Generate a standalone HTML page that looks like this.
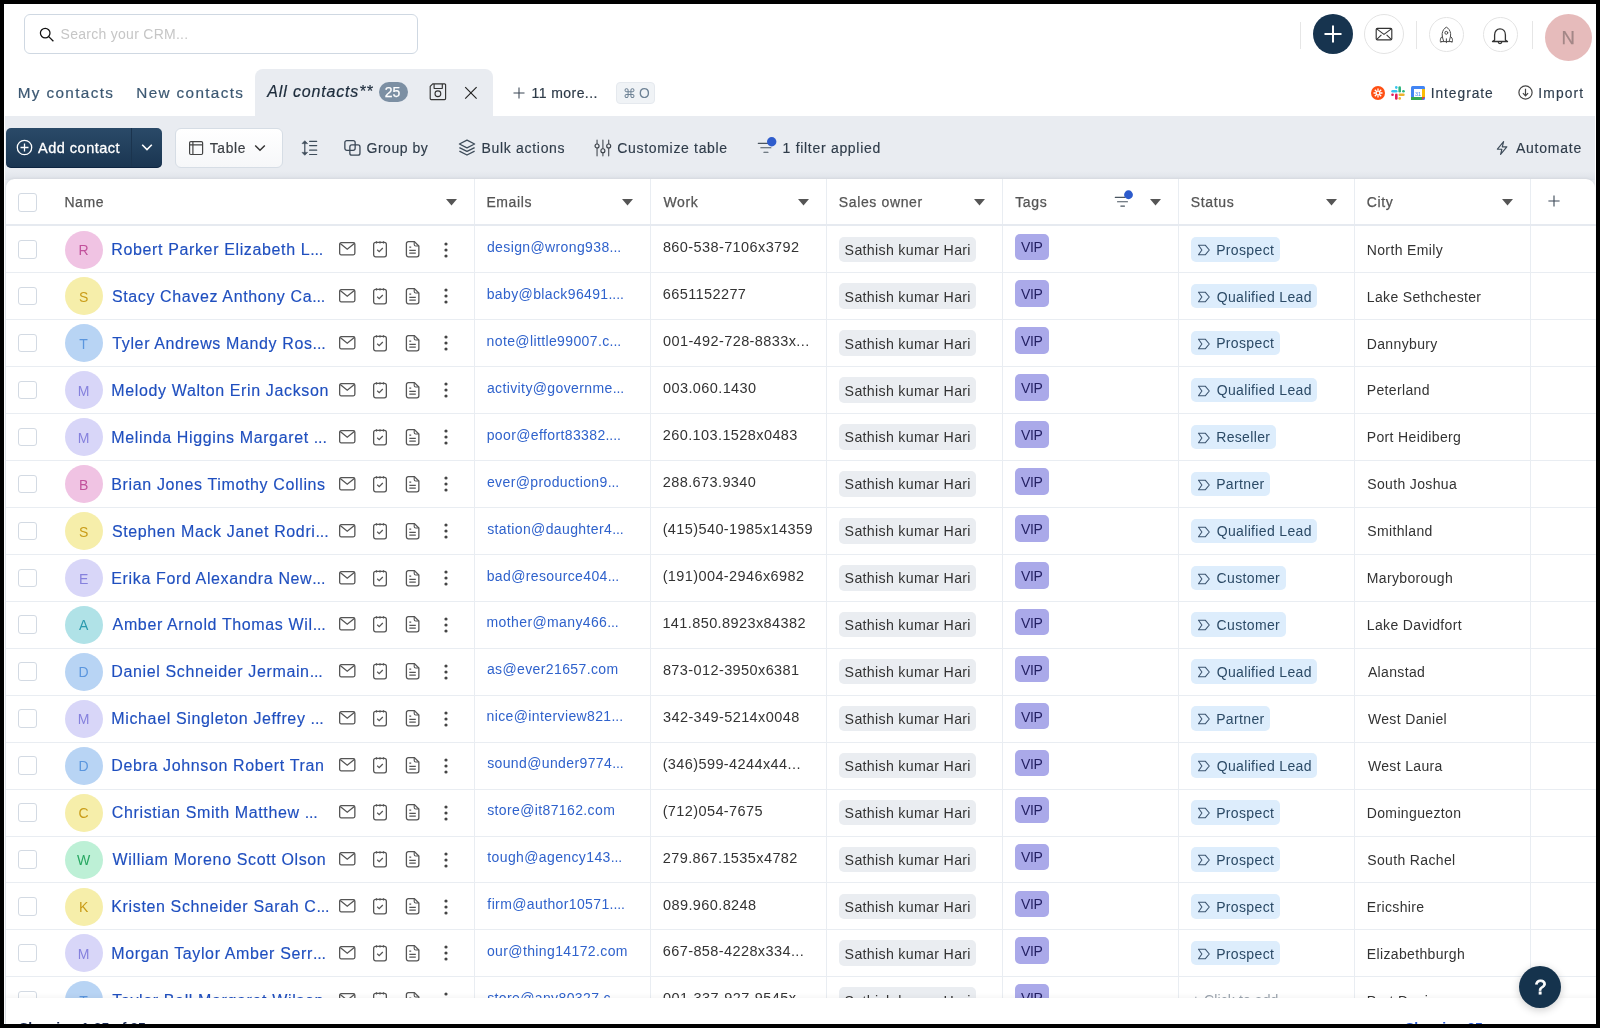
<!DOCTYPE html><html><head><meta charset="utf-8"><style>
*{box-sizing:border-box;margin:0;padding:0}
html,body{width:1600px;height:1028px;overflow:hidden;background:#fff}
#root{position:absolute;left:0;top:0;width:1600px;height:1028px;will-change:transform}
body{position:relative;font-family:"Liberation Sans",sans-serif;color:#333}
.a{position:absolute}
.t{position:absolute;white-space:nowrap;line-height:1;-webkit-font-smoothing:antialiased}
.bd{position:absolute;background:#000}
svg{display:block}
</style></head><body><div id="root">
<div class="a" style="left:24px;top:14px;width:394px;height:40px;border:1px solid #cfd8e2;border-radius:6px;background:#fff"></div>
<svg class="a" style="left:39px;top:27px" width="16" height="15" viewBox="0 0 16 15"><circle cx="6.2" cy="6.1" r="4.8" fill="none" stroke="#111" stroke-width="1.25"/><path d="M9.7 9.6 L14.4 14.2" stroke="#111" stroke-width="1.3"/></svg>
<div class="t" style="left:60.57px;top:27.00px;font-size:14px;letter-spacing:0.276px;color:#c6c6c6;">Search your CRM...</div>
<div class="a" style="left:1300px;top:22px;width:1px;height:27px;background:#e6e6e6"></div>
<div class="a" style="left:1312.6px;top:14px;width:40px;height:40px;border-radius:50%;background:#17344f"></div>
<svg class="a" style="left:1323px;top:24px" width="20" height="20" viewBox="0 0 20 20"><path d="M10 1.5 V18.5 M1.5 10 H18.5" stroke="#fff" stroke-width="2"/></svg>
<div class="a" style="left:1364px;top:14px;width:40px;height:40px;border-radius:50%;border:1px solid #e3e3e3"></div>
<svg class="a" style="left:1375px;top:27px" width="18" height="14" viewBox="0 0 18 14"><rect x="1.2" y="1.3" width="15.6" height="11.6" rx="1.2" fill="none" stroke="#333" stroke-width="1.15"/><path d="M1.7 1.8 L9 7.4 L16.3 1.8 M1.8 12.4 L6.4 7.8 M16.2 12.4 L11.6 7.8" fill="none" stroke="#333" stroke-width="1.05"/></svg>
<div class="a" style="left:1416px;top:21px;width:1px;height:28px;background:#e6e6e6"></div>
<div class="a" style="left:1429px;top:16.5px;width:35px;height:35px;border-radius:50%;border:1px solid #e3e3e3"></div>
<svg class="a" style="left:1439px;top:26px" width="15" height="18" viewBox="0 0 15 18"><g fill="none" stroke="#484848" stroke-width="1" stroke-linejoin="round" stroke-linecap="round"><path d="M4.7 15.3 C3.5 12 3.0 9.3 3.2 7.5 C3.6 4.5 5.3 2.2 7.4 1.2 C9.5 2.2 11.2 4.5 11.6 7.5 C11.8 9.3 11.3 12 10.1 15.3"/><path d="M2.3 15.6 H12.5"/><path d="M3.5 10.2 C2 11.2 1.3 12.8 1.3 14.5 C1.3 15.6 1.5 16.2 1.9 16.4 L2.6 15.6"/><path d="M11.3 10.2 C12.8 11.2 13.5 12.8 13.5 14.5 C13.5 15.6 13.3 16.2 12.9 16.4 L12.2 15.6"/><path d="M7.4 12.8 V16.7"/><circle cx="7.3" cy="6.8" r="1.45"/></g></svg>
<div class="a" style="left:1483px;top:16.5px;width:35px;height:35px;border-radius:50%;border:1px solid #e3e3e3"></div>
<svg class="a" style="left:1491px;top:27px" width="18" height="18" viewBox="0 0 18 18"><path d="M3.6 13 V8 C3.6 4.3 6 1.8 9 1.8 C12 1.8 14.4 4.3 14.4 8 V13 L16.5 14.5 H1.5 Z" fill="none" stroke="#333" stroke-width="1.3" stroke-linejoin="round"/><path d="M7.2 14.8 a1.8 1.8 0 0 0 3.6 0" fill="none" stroke="#333" stroke-width="1.2"/></svg>
<div class="a" style="left:1532px;top:21px;width:1px;height:28px;background:#e6e6e6"></div>
<div class="a" style="left:1545px;top:14px;width:47px;height:47px;border-radius:50%;background:#e6bbbb"></div>
<div class="t" style="left:1561.52px;top:29.00px;font-size:18.5px;letter-spacing:0.000px;color:#a38787;-webkit-text-stroke:0.25px #a38787">N</div>
<div class="t" style="left:17.68px;top:85.00px;font-size:15.3px;letter-spacing:1.373px;color:#3c5872;-webkit-text-stroke:0.2px #3c5872">My contacts</div>
<div class="t" style="left:136.28px;top:85.00px;font-size:15.3px;letter-spacing:1.353px;color:#3c5872;-webkit-text-stroke:0.2px #3c5872">New contacts</div>
<div class="a" style="left:255px;top:69px;width:238px;height:50px;border-radius:8px 8px 0 0;background:#e9ecf1"></div>
<div class="t" style="left:267.30px;top:84.00px;font-size:16px;letter-spacing:0.838px;color:#1c2b3b;font-style:italic;-webkit-text-stroke:0.2px #1c2b3b">All contacts**</div>
<div class="a" style="left:379px;top:81.5px;width:28.5px;height:20px;border-radius:10px;background:#7c8fa3"></div>
<div class="t" style="left:384.80px;top:85.00px;font-size:14px;letter-spacing:0.000px;color:#fff;-webkit-text-stroke:0.25px #fff">25</div>
<svg class="a" style="left:429px;top:82px" width="18" height="19" viewBox="0 0 18 19"><path d="M3.7 1.85 H15.6 a1 1 0 0 1 1 1 V16.6 a1 1 0 0 1 -1 1 H2.2 a1 1 0 0 1 -1 -1 V4.3 Z" fill="none" stroke="#333" stroke-width="1.15" stroke-linejoin="round"/><path d="M5.1 2 V5.9 a0.6 0.6 0 0 0 0.6 0.6 H12.7 a0.6 0.6 0 0 0 0.6 -0.6 V2" fill="none" stroke="#333" stroke-width="1.15"/><circle cx="8.9" cy="11.75" r="2.9" fill="none" stroke="#333" stroke-width="1.1"/></svg>
<svg class="a" style="left:464px;top:86px" width="14" height="14" viewBox="0 0 14 14"><path d="M1.2 1.2 L12.6 12.6 M12.6 1.2 L1.2 12.6" stroke="#222" stroke-width="1.15"/></svg>
<svg class="a" style="left:513px;top:86.5px" width="12" height="12" viewBox="0 0 12 12"><path d="M6 0.5 V11.5 M0.5 6 H11.5" stroke="#3a4654" stroke-width="1.05"/></svg>
<div class="t" style="left:531.45px;top:86.00px;font-size:14px;letter-spacing:0.443px;color:#2d3a48;-webkit-text-stroke:0.2px #2d3a48">11 more...</div>
<div class="a" style="left:616px;top:81.5px;width:39px;height:22px;border-radius:4px;background:#f0f3f6;border:1px solid #e5e9ee"></div>
<div class="t" style="left:622.5px;top:88px;font-size:12.5px;color:#6e8295">&#8984;</div>
<div class="t" style="left:638.88px;top:87.00px;font-size:13.8px;letter-spacing:0.000px;color:#6e8295;">O</div>
<svg class="a" style="left:1371px;top:86px" width="14" height="14" viewBox="0 0 14 14"><circle cx="7" cy="7" r="7" fill="#ff4f12"/><path d="M7 2.5 V11.5 M2.5 7 H11.5 M3.8 3.8 L10.2 10.2 M10.2 3.8 L3.8 10.2" stroke="#fff" stroke-width="1.3"/><circle cx="7" cy="7" r="1.2" fill="#ff4f12"/></svg>
<svg class="a" style="left:1391px;top:86px" width="14" height="14" viewBox="0 0 14 14"><g stroke-linecap="round" stroke-width="2.6"><path d="M1.6 5.3 H5.2" stroke="#36c5f0"/><path d="M5.3 1.4 V1.6" stroke="#36c5f0"/><path d="M8.7 1.5 V5.2" stroke="#2eb67d"/><path d="M12.5 5.3 H12.4" stroke="#2eb67d"/><path d="M8.8 8.7 H12.4" stroke="#ecb22e"/><path d="M8.7 12.5 V12.4" stroke="#ecb22e"/><path d="M5.3 8.8 V12.5" stroke="#e01e5a"/><path d="M1.5 8.7 H1.6" stroke="#e01e5a"/></g></svg>
<svg class="a" style="left:1411px;top:86px" width="14" height="14" viewBox="0 0 14 14"><rect x="0" y="0" width="14" height="14" rx="1.5" fill="#4285f4"/><rect x="3" y="3" width="8" height="8" fill="#fff"/><rect x="11" y="3" width="3" height="8" fill="#fbbc04"/><rect x="0" y="11" width="11" height="3" fill="#34a853"/><path d="M11 11 H14 L11 14 Z" fill="#ea4335"/><text x="7" y="9.6" font-size="5.5" text-anchor="middle" fill="#4285f4" font-family="Liberation Sans">31</text></svg>
<div class="t" style="left:1430.66px;top:87.00px;font-size:13.8px;letter-spacing:0.957px;color:#2d3c4c;-webkit-text-stroke:0.15px #2d3c4c">Integrate</div>
<svg class="a" style="left:1518px;top:85px" width="15" height="15" viewBox="0 0 15 15"><circle cx="7.5" cy="7.5" r="6.6" fill="none" stroke="#444" stroke-width="1.2"/><path d="M7.5 3.8 V10.6 M4.9 8.2 L7.5 10.8 L10.1 8.2" fill="none" stroke="#444" stroke-width="1.2"/></svg>
<div class="t" style="left:1538.36px;top:87.00px;font-size:13.8px;letter-spacing:1.138px;color:#2d3c4c;-webkit-text-stroke:0.15px #2d3c4c">Import</div>
<div class="a" style="left:5px;top:116px;width:1590px;height:908px;background:#e9ecf1"></div>
<div class="a" style="left:5px;top:171px;width:1590px;height:9px;background:linear-gradient(rgba(0,0,0,0),rgba(30,50,80,0.05))"></div>
<div class="a" style="left:6px;top:128px;width:156px;height:39.5px;border-radius:5px;background:linear-gradient(#2a4a68,#1a3551);box-shadow:inset 0 -1px 0 rgba(0,20,50,0.5)"></div>
<div class="a" style="left:131px;top:128px;width:1px;height:39px;background:#1b344e"></div>
<svg class="a" style="left:16px;top:139px" width="17" height="17" viewBox="0 0 17 17"><circle cx="8.5" cy="8.5" r="7.2" fill="none" stroke="#fff" stroke-width="1.3"/><path d="M8.5 4.5 V12.5 M4.5 8.5 H12.5" stroke="#fff" stroke-width="1.3"/></svg>
<div class="t" style="left:38.00px;top:141.00px;font-size:14.5px;letter-spacing:0.504px;color:#fff;-webkit-text-stroke:0.3px #fff">Add contact</div>
<svg class="a" style="left:141px;top:143px" width="12" height="9" viewBox="0 0 12 9"><path d="M1.2 1.8 L6 6.6 L10.8 1.8" fill="none" stroke="#fff" stroke-width="1.6"/></svg>
<div class="a" style="left:175px;top:128px;width:108px;height:39.5px;border-radius:6px;background:linear-gradient(#ffffff,#f6f7f9);border:1px solid #d6dde5"></div>
<svg class="a" style="left:188px;top:140px" width="16" height="16" viewBox="0 0 16 16"><rect x="1.6" y="1.6" width="13" height="12.9" rx="1.2" fill="none" stroke="#444" stroke-width="1.2"/><path d="M1.6 4.9 H14.6 M4.9 1.6 V14.5" stroke="#444" stroke-width="1.2"/></svg>
<div class="t" style="left:209.72px;top:142.00px;font-size:13.8px;letter-spacing:0.711px;color:#3b3f44;-webkit-text-stroke:0.2px #3b3f44">Table</div>
<svg class="a" style="left:254px;top:144px" width="12" height="8" viewBox="0 0 12 8"><path d="M1.2 1.5 L6 6.2 L10.8 1.5" fill="none" stroke="#333" stroke-width="1.5"/></svg>
<svg class="a" style="left:300px;top:139px" width="20" height="18" viewBox="0 0 20 18"><path d="M4.8 3 V15" fill="none" stroke="#3e4c5a" stroke-width="1.2"/><path d="M2 4.6 L4.8 1.7 L7.6 4.6 Z M2 13.4 L4.8 16.3 L7.6 13.4 Z" fill="#3e4c5a" stroke="#3e4c5a" stroke-width="0.6" stroke-linejoin="round"/><path d="M9.6 2.3 H16.7 M9.6 6.6 H16.7 M9.6 11.2 H16.7 M9.6 15.5 H16.7" stroke="#3e4c5a" stroke-width="1.2" stroke-linecap="round"/></svg>
<svg class="a" style="left:343px;top:139px" width="18" height="18" viewBox="0 0 18 18"><rect x="1.85" y="1.55" width="10.3" height="9.8" rx="2" fill="none" stroke="#3a4756" stroke-width="1.3"/><rect x="6.85" y="5.9" width="10.1" height="10.25" rx="2" fill="none" stroke="#3a4756" stroke-width="1.3"/></svg>
<div class="t" style="left:366.50px;top:141.00px;font-size:14px;letter-spacing:0.527px;color:#2f3c4a;-webkit-text-stroke:0.15px #2f3c4a">Group by</div>
<svg class="a" style="left:458px;top:139px" width="18" height="18" viewBox="0 0 18 18"><path d="M9 1.2 L16.6 5 L9 8.8 L1.4 5 Z" fill="none" stroke="#3e4c5a" stroke-width="1.3" stroke-linejoin="round"/><path d="M1.4 8.6 L9 12.4 L16.6 8.6 M1.4 12.2 L9 16 L16.6 12.2" fill="none" stroke="#3e4c5a" stroke-width="1.3" stroke-linejoin="round"/></svg>
<div class="t" style="left:481.48px;top:141.00px;font-size:14px;letter-spacing:0.695px;color:#2f3c4a;-webkit-text-stroke:0.15px #2f3c4a">Bulk actions</div>
<svg class="a" style="left:594px;top:139px" width="18" height="18" viewBox="0 0 18 18"><path d="M3.05 1 V16.8 M8.9 1 V16.8 M14.7 1 V16.8" stroke="#4a5058" stroke-width="1.15" stroke-linecap="round"/><circle cx="3.05" cy="7" r="2" fill="#e9ecf1" stroke="#3a4048" stroke-width="1.15"/><circle cx="8.9" cy="11.7" r="2" fill="#e9ecf1" stroke="#3a4048" stroke-width="1.15"/><circle cx="14.7" cy="7" r="2" fill="#e9ecf1" stroke="#3a4048" stroke-width="1.15"/></svg>
<div class="t" style="left:617.30px;top:141.00px;font-size:14px;letter-spacing:0.677px;color:#2f3c4a;-webkit-text-stroke:0.15px #2f3c4a">Customize table</div>
<svg class="a" style="left:757px;top:136px" width="22" height="18" viewBox="0 0 22 18"><path d="M1.3 7.4 H12 M3.8 11.8 H13.9 M6.9 16.2 H11" stroke="#4a5560" stroke-width="1.1" stroke-linecap="round"/><circle cx="14.7" cy="5.8" r="4.7" fill="#2e5ccc"/></svg>
<div class="t" style="left:782.55px;top:141.00px;font-size:14px;letter-spacing:0.703px;color:#2f3c4a;-webkit-text-stroke:0.15px #2f3c4a">1 filter applied</div>
<svg class="a" style="left:1495px;top:140px" width="14" height="16" viewBox="0 0 14 16"><path d="M8.6 1.6 L2.4 9.2 H6.9 L5.6 14.4 L11.8 6.8 H7.3 Z" fill="none" stroke="#3e4c5a" stroke-width="1.15" stroke-linejoin="round"/></svg>
<div class="t" style="left:1516.00px;top:141.00px;font-size:14px;letter-spacing:0.749px;color:#2f3c4a;-webkit-text-stroke:0.15px #2f3c4a">Automate</div>
<div class="a" style="left:5px;top:179.3px;width:1590px;height:845px;background:#fff;border-radius:9px 9px 0 0;border-left:1px solid #dfe4ea;box-shadow:0 -1px 3px rgba(0,0,0,0.05)"></div>
<div class="t" style="left:64.38px;top:195.00px;font-size:14px;letter-spacing:0.62px;color:#555;-webkit-text-stroke:0.25px #555">Name</div>
<svg class="a" style="left:446px;top:199px" width="11" height="7" viewBox="0 0 11 7"><path d="M0 0 H11 L5.5 6.5 Z" fill="#555"/></svg>
<div class="t" style="left:486.38px;top:195.00px;font-size:14px;letter-spacing:0.62px;color:#555;-webkit-text-stroke:0.25px #555">Emails</div>
<svg class="a" style="left:622px;top:199px" width="11" height="7" viewBox="0 0 11 7"><path d="M0 0 H11 L5.5 6.5 Z" fill="#555"/></svg>
<div class="t" style="left:663.50px;top:195.00px;font-size:14px;letter-spacing:0.62px;color:#555;-webkit-text-stroke:0.25px #555">Work</div>
<svg class="a" style="left:798px;top:199px" width="11" height="7" viewBox="0 0 11 7"><path d="M0 0 H11 L5.5 6.5 Z" fill="#555"/></svg>
<div class="t" style="left:838.87px;top:195.00px;font-size:14px;letter-spacing:0.62px;color:#555;-webkit-text-stroke:0.25px #555">Sales owner</div>
<svg class="a" style="left:974px;top:199px" width="11" height="7" viewBox="0 0 11 7"><path d="M0 0 H11 L5.5 6.5 Z" fill="#555"/></svg>
<div class="t" style="left:1015.22px;top:195.00px;font-size:14px;letter-spacing:0.62px;color:#555;-webkit-text-stroke:0.25px #555">Tags</div>
<svg class="a" style="left:1150px;top:199px" width="11" height="7" viewBox="0 0 11 7"><path d="M0 0 H11 L5.5 6.5 Z" fill="#555"/></svg>
<div class="t" style="left:1190.87px;top:195.00px;font-size:14px;letter-spacing:0.62px;color:#555;-webkit-text-stroke:0.25px #555">Status</div>
<svg class="a" style="left:1326px;top:199px" width="11" height="7" viewBox="0 0 11 7"><path d="M0 0 H11 L5.5 6.5 Z" fill="#555"/></svg>
<div class="t" style="left:1366.80px;top:195.00px;font-size:14px;letter-spacing:0.62px;color:#555;-webkit-text-stroke:0.25px #555">City</div>
<svg class="a" style="left:1502px;top:199px" width="11" height="7" viewBox="0 0 11 7"><path d="M0 0 H11 L5.5 6.5 Z" fill="#555"/></svg>
<div class="a" style="left:18px;top:193px;width:19px;height:19px;border:1.3px solid #d3dae3;border-radius:3px;background:#fff"></div>
<svg class="a" style="left:1114px;top:189px" width="20" height="18" viewBox="0 0 20 18"><path d="M1.3 8.4 H11 M3.5 12.75 H13.5 M6.8 17.1 H10.5" stroke="#4a5560" stroke-width="1.1" stroke-linecap="round"/><circle cx="14.5" cy="5.75" r="4.4" fill="#2d5bcc"/></svg>
<svg class="a" style="left:1548.2px;top:194.5px" width="12" height="12" viewBox="0 0 12 12"><path d="M6 0.5 V11.4 M0.4 6 H11.6" stroke="#3a4756" stroke-width="1.1"/></svg>
<div class="a" style="left:474px;top:179px;width:1px;height:819px;background:#e9edf2"></div>
<div class="a" style="left:650px;top:179px;width:1px;height:819px;background:#e9edf2"></div>
<div class="a" style="left:826px;top:179px;width:1px;height:819px;background:#e9edf2"></div>
<div class="a" style="left:1002px;top:179px;width:1px;height:819px;background:#e9edf2"></div>
<div class="a" style="left:1178px;top:179px;width:1px;height:819px;background:#e9edf2"></div>
<div class="a" style="left:1354px;top:179px;width:1px;height:819px;background:#e9edf2"></div>
<div class="a" style="left:1530px;top:179px;width:1px;height:819px;background:#e9edf2"></div>
<div class="a" style="left:6px;top:224px;width:1590px;height:2px;background:#e6eaf0"></div>
<div class="a" style="left:6px;top:272.40px;width:1590px;height:1px;background:#e9edf2"></div>
<div class="a" style="left:18px;top:240.00px;width:18.5px;height:18.5px;border:1.3px solid #d3dae3;border-radius:3px;background:#fff"></div>
<div class="a" style="left:64.6px;top:230.50px;width:38px;height:38px;border-radius:50%;background:#f0c3e3"></div>
<div class="t" style="left:64.6px;width:38px;text-align:center;top:243.00px;font-size:14px;color:#c2519c">R</div>
<div class="t" style="left:111.32px;top:242.00px;font-size:16px;letter-spacing:0.63px;color:#1f4fbf;-webkit-text-stroke:0.15px #1f4fbf">Robert Parker Elizabeth L<span style="letter-spacing:-0.15px">...</span></div>
<div class="a" style="left:337.5px;top:241.00px"><svg width="18" height="15" viewBox="0 0 18 15"><rect x="1.65" y="1.65" width="15.2" height="12.2" rx="1.5" fill="none" stroke="#555" stroke-width="1.3"/><path d="M2.2 2.4 L9.25 8.2 L16.3 2.4" fill="none" stroke="#555" stroke-width="1.3"/></svg></div>
<div class="a" style="left:371.5px;top:240.00px"><svg width="16" height="18" viewBox="0 0 16 18"><rect x="1.65" y="2.4" width="12.7" height="14.4" rx="2" fill="none" stroke="#555" stroke-width="1.3"/><path d="M4.5 1.2v2.4M8 1.2v2.4M11.5 1.2v2.4" stroke="#555" stroke-width="1.2"/><path d="M5.2 9.8 L7.2 11.7 L10.8 8" fill="none" stroke="#555" stroke-width="1.2"/></svg></div>
<div class="a" style="left:404.5px;top:240.00px"><svg width="16" height="18" viewBox="0 0 16 18"><path d="M3.4 1.65 H9.4 L13.85 6.1 V14.8 a2 2 0 0 1 -2 2 H3.4 a2 2 0 0 1 -2 -2 V3.65 a2 2 0 0 1 2 -2 Z" fill="none" stroke="#555" stroke-width="1.3"/><path d="M9.2 1.8 V4.5 a1.5 1.5 0 0 0 1.5 1.5 H13.7" fill="none" stroke="#555" stroke-width="1.1"/><path d="M4.3 7.2 H6.2 M4.3 10.3 H10.8 M4.3 13.2 H10.8" stroke="#555" stroke-width="1.2"/></svg></div>
<div class="a" style="left:443px;top:241.50px"><svg width="6" height="16" viewBox="0 0 6 16"><circle cx="3" cy="2" r="1.6" fill="#444"/><circle cx="3" cy="8" r="1.6" fill="#444"/><circle cx="3" cy="14" r="1.6" fill="#444"/></svg></div>
<div class="t" style="left:486.94px;top:240.00px;font-size:14px;letter-spacing:0.38px;color:#2f62cc;">design@wrong938<span style="letter-spacing:-0.1px">...</span></div>
<div class="t" style="left:662.92px;top:240.00px;font-size:14.5px;letter-spacing:0.4px;color:#333;">860-538-7106x3792</div>
<div class="a" style="left:839px;top:236.50px;width:137px;height:25.5px;border-radius:5px;background:#eaedf1"></div>
<div class="t" style="left:844.61px;top:243.00px;font-size:14.2px;letter-spacing:0.310px;color:#333;">Sathish kumar Hari</div>
<div class="a" style="left:1015px;top:233.50px;width:33.5px;height:26.5px;border-radius:5px;background:#aaa9e9"></div>
<div class="t" style="left:1021.00px;top:240.00px;font-size:14px;letter-spacing:-0.320px;color:#221f62;">VIP</div>
<div class="a" style="left:1190.6px;top:237.00px;height:24.5px;width:89.6px;border-radius:5px;background:#ddedfc"></div>
<div class="a" style="left:1197px;top:244.00px"><svg width="14" height="12" viewBox="0 0 14 12"><path d="M1.5 1.2 H8.2 L12.3 6 L8.2 10.8 H1.5 L4.9 6 Z" fill="none" stroke="#3d5570" stroke-width="1.1" stroke-linejoin="round"/></svg></div>
<div class="t" style="left:1216.18px;top:243.00px;font-size:14px;letter-spacing:0.35px;color:#2b4a66;">Prospect</div>
<div class="t" style="left:1366.78px;top:243.00px;font-size:14px;letter-spacing:0.354px;color:#333;">North Emily</div>
<div class="a" style="left:6px;top:319.33px;width:1590px;height:1px;background:#e9edf2"></div>
<div class="a" style="left:18px;top:286.93px;width:18.5px;height:18.5px;border:1.3px solid #d3dae3;border-radius:3px;background:#fff"></div>
<div class="a" style="left:64.6px;top:277.43px;width:38px;height:38px;border-radius:50%;background:#f6eeaa"></div>
<div class="t" style="left:64.6px;width:38px;text-align:center;top:289.93px;font-size:14px;color:#c99c18">S</div>
<div class="t" style="left:111.88px;top:289.00px;font-size:16px;letter-spacing:0.63px;color:#1f4fbf;-webkit-text-stroke:0.15px #1f4fbf">Stacy Chavez Anthony Ca<span style="letter-spacing:-0.15px">...</span></div>
<div class="a" style="left:337.5px;top:287.93px"><svg width="18" height="15" viewBox="0 0 18 15"><rect x="1.65" y="1.65" width="15.2" height="12.2" rx="1.5" fill="none" stroke="#555" stroke-width="1.3"/><path d="M2.2 2.4 L9.25 8.2 L16.3 2.4" fill="none" stroke="#555" stroke-width="1.3"/></svg></div>
<div class="a" style="left:371.5px;top:286.93px"><svg width="16" height="18" viewBox="0 0 16 18"><rect x="1.65" y="2.4" width="12.7" height="14.4" rx="2" fill="none" stroke="#555" stroke-width="1.3"/><path d="M4.5 1.2v2.4M8 1.2v2.4M11.5 1.2v2.4" stroke="#555" stroke-width="1.2"/><path d="M5.2 9.8 L7.2 11.7 L10.8 8" fill="none" stroke="#555" stroke-width="1.2"/></svg></div>
<div class="a" style="left:404.5px;top:286.93px"><svg width="16" height="18" viewBox="0 0 16 18"><path d="M3.4 1.65 H9.4 L13.85 6.1 V14.8 a2 2 0 0 1 -2 2 H3.4 a2 2 0 0 1 -2 -2 V3.65 a2 2 0 0 1 2 -2 Z" fill="none" stroke="#555" stroke-width="1.3"/><path d="M9.2 1.8 V4.5 a1.5 1.5 0 0 0 1.5 1.5 H13.7" fill="none" stroke="#555" stroke-width="1.1"/><path d="M4.3 7.2 H6.2 M4.3 10.3 H10.8 M4.3 13.2 H10.8" stroke="#555" stroke-width="1.2"/></svg></div>
<div class="a" style="left:443px;top:288.43px"><svg width="6" height="16" viewBox="0 0 6 16"><circle cx="3" cy="2" r="1.6" fill="#444"/><circle cx="3" cy="8" r="1.6" fill="#444"/><circle cx="3" cy="14" r="1.6" fill="#444"/></svg></div>
<div class="t" style="left:486.66px;top:287.00px;font-size:14px;letter-spacing:0.38px;color:#2f62cc;">baby@black96491<span style="letter-spacing:-0.1px">...</span>.</div>
<div class="t" style="left:662.77px;top:287.00px;font-size:14.5px;letter-spacing:0.4px;color:#333;">6651152277</div>
<div class="a" style="left:839px;top:283.43px;width:137px;height:25.5px;border-radius:5px;background:#eaedf1"></div>
<div class="t" style="left:844.61px;top:290.00px;font-size:14.2px;letter-spacing:0.310px;color:#333;">Sathish kumar Hari</div>
<div class="a" style="left:1015px;top:280.43px;width:33.5px;height:26.5px;border-radius:5px;background:#aaa9e9"></div>
<div class="t" style="left:1021.00px;top:287.00px;font-size:14px;letter-spacing:-0.320px;color:#221f62;">VIP</div>
<div class="a" style="left:1190.6px;top:283.93px;height:24.5px;width:126.4px;border-radius:5px;background:#ddedfc"></div>
<div class="a" style="left:1197px;top:290.93px"><svg width="14" height="12" viewBox="0 0 14 12"><path d="M1.5 1.2 H8.2 L12.3 6 L8.2 10.8 H1.5 L4.9 6 Z" fill="none" stroke="#3d5570" stroke-width="1.1" stroke-linejoin="round"/></svg></div>
<div class="t" style="left:1216.67px;top:290.00px;font-size:14px;letter-spacing:0.35px;color:#2b4a66;">Qualified Lead</div>
<div class="t" style="left:1366.78px;top:290.00px;font-size:14px;letter-spacing:0.354px;color:#333;">Lake Sethchester</div>
<div class="a" style="left:6px;top:366.26px;width:1590px;height:1px;background:#e9edf2"></div>
<div class="a" style="left:18px;top:333.86px;width:18.5px;height:18.5px;border:1.3px solid #d3dae3;border-radius:3px;background:#fff"></div>
<div class="a" style="left:64.6px;top:324.36px;width:38px;height:38px;border-radius:50%;background:#b8d4f4"></div>
<div class="t" style="left:64.6px;width:38px;text-align:center;top:336.86px;font-size:14px;color:#5b96de">T</div>
<div class="t" style="left:112.28px;top:336.00px;font-size:16px;letter-spacing:0.63px;color:#1f4fbf;-webkit-text-stroke:0.15px #1f4fbf">Tyler Andrews Mandy Ros<span style="letter-spacing:-0.15px">...</span></div>
<div class="a" style="left:337.5px;top:334.86px"><svg width="18" height="15" viewBox="0 0 18 15"><rect x="1.65" y="1.65" width="15.2" height="12.2" rx="1.5" fill="none" stroke="#555" stroke-width="1.3"/><path d="M2.2 2.4 L9.25 8.2 L16.3 2.4" fill="none" stroke="#555" stroke-width="1.3"/></svg></div>
<div class="a" style="left:371.5px;top:333.86px"><svg width="16" height="18" viewBox="0 0 16 18"><rect x="1.65" y="2.4" width="12.7" height="14.4" rx="2" fill="none" stroke="#555" stroke-width="1.3"/><path d="M4.5 1.2v2.4M8 1.2v2.4M11.5 1.2v2.4" stroke="#555" stroke-width="1.2"/><path d="M5.2 9.8 L7.2 11.7 L10.8 8" fill="none" stroke="#555" stroke-width="1.2"/></svg></div>
<div class="a" style="left:404.5px;top:333.86px"><svg width="16" height="18" viewBox="0 0 16 18"><path d="M3.4 1.65 H9.4 L13.85 6.1 V14.8 a2 2 0 0 1 -2 2 H3.4 a2 2 0 0 1 -2 -2 V3.65 a2 2 0 0 1 2 -2 Z" fill="none" stroke="#555" stroke-width="1.3"/><path d="M9.2 1.8 V4.5 a1.5 1.5 0 0 0 1.5 1.5 H13.7" fill="none" stroke="#555" stroke-width="1.1"/><path d="M4.3 7.2 H6.2 M4.3 10.3 H10.8 M4.3 13.2 H10.8" stroke="#555" stroke-width="1.2"/></svg></div>
<div class="a" style="left:443px;top:335.36px"><svg width="6" height="16" viewBox="0 0 6 16"><circle cx="3" cy="2" r="1.6" fill="#444"/><circle cx="3" cy="8" r="1.6" fill="#444"/><circle cx="3" cy="14" r="1.6" fill="#444"/></svg></div>
<div class="t" style="left:486.59px;top:334.00px;font-size:14px;letter-spacing:0.38px;color:#2f62cc;">note@little99007.c<span style="letter-spacing:-0.1px">...</span></div>
<div class="t" style="left:662.99px;top:334.00px;font-size:14.5px;letter-spacing:0.4px;color:#333;">001-492-728-8833x...</div>
<div class="a" style="left:839px;top:330.36px;width:137px;height:25.5px;border-radius:5px;background:#eaedf1"></div>
<div class="t" style="left:844.61px;top:337.00px;font-size:14.2px;letter-spacing:0.310px;color:#333;">Sathish kumar Hari</div>
<div class="a" style="left:1015px;top:327.36px;width:33.5px;height:26.5px;border-radius:5px;background:#aaa9e9"></div>
<div class="t" style="left:1021.00px;top:334.00px;font-size:14px;letter-spacing:-0.320px;color:#221f62;">VIP</div>
<div class="a" style="left:1190.6px;top:330.86px;height:24.5px;width:89.6px;border-radius:5px;background:#ddedfc"></div>
<div class="a" style="left:1197px;top:337.86px"><svg width="14" height="12" viewBox="0 0 14 12"><path d="M1.5 1.2 H8.2 L12.3 6 L8.2 10.8 H1.5 L4.9 6 Z" fill="none" stroke="#3d5570" stroke-width="1.1" stroke-linejoin="round"/></svg></div>
<div class="t" style="left:1216.18px;top:336.00px;font-size:14px;letter-spacing:0.35px;color:#2b4a66;">Prospect</div>
<div class="t" style="left:1366.78px;top:337.00px;font-size:14px;letter-spacing:0.354px;color:#333;">Dannybury</div>
<div class="a" style="left:6px;top:413.19px;width:1590px;height:1px;background:#e9edf2"></div>
<div class="a" style="left:18px;top:380.79px;width:18.5px;height:18.5px;border:1.3px solid #d3dae3;border-radius:3px;background:#fff"></div>
<div class="a" style="left:64.6px;top:371.29px;width:38px;height:38px;border-radius:50%;background:#d8d6f8"></div>
<div class="t" style="left:64.6px;width:38px;text-align:center;top:383.79px;font-size:14px;color:#8581dd">M</div>
<div class="t" style="left:111.32px;top:383.00px;font-size:16px;letter-spacing:0.63px;color:#1f4fbf;-webkit-text-stroke:0.15px #1f4fbf">Melody Walton Erin Jackson</div>
<div class="a" style="left:337.5px;top:381.79px"><svg width="18" height="15" viewBox="0 0 18 15"><rect x="1.65" y="1.65" width="15.2" height="12.2" rx="1.5" fill="none" stroke="#555" stroke-width="1.3"/><path d="M2.2 2.4 L9.25 8.2 L16.3 2.4" fill="none" stroke="#555" stroke-width="1.3"/></svg></div>
<div class="a" style="left:371.5px;top:380.79px"><svg width="16" height="18" viewBox="0 0 16 18"><rect x="1.65" y="2.4" width="12.7" height="14.4" rx="2" fill="none" stroke="#555" stroke-width="1.3"/><path d="M4.5 1.2v2.4M8 1.2v2.4M11.5 1.2v2.4" stroke="#555" stroke-width="1.2"/><path d="M5.2 9.8 L7.2 11.7 L10.8 8" fill="none" stroke="#555" stroke-width="1.2"/></svg></div>
<div class="a" style="left:404.5px;top:380.79px"><svg width="16" height="18" viewBox="0 0 16 18"><path d="M3.4 1.65 H9.4 L13.85 6.1 V14.8 a2 2 0 0 1 -2 2 H3.4 a2 2 0 0 1 -2 -2 V3.65 a2 2 0 0 1 2 -2 Z" fill="none" stroke="#555" stroke-width="1.3"/><path d="M9.2 1.8 V4.5 a1.5 1.5 0 0 0 1.5 1.5 H13.7" fill="none" stroke="#555" stroke-width="1.1"/><path d="M4.3 7.2 H6.2 M4.3 10.3 H10.8 M4.3 13.2 H10.8" stroke="#555" stroke-width="1.2"/></svg></div>
<div class="a" style="left:443px;top:382.29px"><svg width="6" height="16" viewBox="0 0 6 16"><circle cx="3" cy="2" r="1.6" fill="#444"/><circle cx="3" cy="8" r="1.6" fill="#444"/><circle cx="3" cy="14" r="1.6" fill="#444"/></svg></div>
<div class="t" style="left:486.94px;top:381.00px;font-size:14px;letter-spacing:0.38px;color:#2f62cc;">activity@governme<span style="letter-spacing:-0.1px">...</span></div>
<div class="t" style="left:662.99px;top:381.00px;font-size:14.5px;letter-spacing:0.4px;color:#333;">003.060.1430</div>
<div class="a" style="left:839px;top:377.29px;width:137px;height:25.5px;border-radius:5px;background:#eaedf1"></div>
<div class="t" style="left:844.61px;top:384.00px;font-size:14.2px;letter-spacing:0.310px;color:#333;">Sathish kumar Hari</div>
<div class="a" style="left:1015px;top:374.29px;width:33.5px;height:26.5px;border-radius:5px;background:#aaa9e9"></div>
<div class="t" style="left:1021.00px;top:381.00px;font-size:14px;letter-spacing:-0.320px;color:#221f62;">VIP</div>
<div class="a" style="left:1190.6px;top:377.79px;height:24.5px;width:126.4px;border-radius:5px;background:#ddedfc"></div>
<div class="a" style="left:1197px;top:384.79px"><svg width="14" height="12" viewBox="0 0 14 12"><path d="M1.5 1.2 H8.2 L12.3 6 L8.2 10.8 H1.5 L4.9 6 Z" fill="none" stroke="#3d5570" stroke-width="1.1" stroke-linejoin="round"/></svg></div>
<div class="t" style="left:1216.67px;top:383.00px;font-size:14px;letter-spacing:0.35px;color:#2b4a66;">Qualified Lead</div>
<div class="t" style="left:1366.78px;top:383.00px;font-size:14px;letter-spacing:0.354px;color:#333;">Peterland</div>
<div class="a" style="left:6px;top:460.12px;width:1590px;height:1px;background:#e9edf2"></div>
<div class="a" style="left:18px;top:427.72px;width:18.5px;height:18.5px;border:1.3px solid #d3dae3;border-radius:3px;background:#fff"></div>
<div class="a" style="left:64.6px;top:418.22px;width:38px;height:38px;border-radius:50%;background:#d8d6f8"></div>
<div class="t" style="left:64.6px;width:38px;text-align:center;top:430.72px;font-size:14px;color:#8581dd">M</div>
<div class="t" style="left:111.32px;top:430.00px;font-size:16px;letter-spacing:0.63px;color:#1f4fbf;-webkit-text-stroke:0.15px #1f4fbf">Melinda Higgins Margaret <span style="letter-spacing:-0.15px">...</span></div>
<div class="a" style="left:337.5px;top:428.72px"><svg width="18" height="15" viewBox="0 0 18 15"><rect x="1.65" y="1.65" width="15.2" height="12.2" rx="1.5" fill="none" stroke="#555" stroke-width="1.3"/><path d="M2.2 2.4 L9.25 8.2 L16.3 2.4" fill="none" stroke="#555" stroke-width="1.3"/></svg></div>
<div class="a" style="left:371.5px;top:427.72px"><svg width="16" height="18" viewBox="0 0 16 18"><rect x="1.65" y="2.4" width="12.7" height="14.4" rx="2" fill="none" stroke="#555" stroke-width="1.3"/><path d="M4.5 1.2v2.4M8 1.2v2.4M11.5 1.2v2.4" stroke="#555" stroke-width="1.2"/><path d="M5.2 9.8 L7.2 11.7 L10.8 8" fill="none" stroke="#555" stroke-width="1.2"/></svg></div>
<div class="a" style="left:404.5px;top:427.72px"><svg width="16" height="18" viewBox="0 0 16 18"><path d="M3.4 1.65 H9.4 L13.85 6.1 V14.8 a2 2 0 0 1 -2 2 H3.4 a2 2 0 0 1 -2 -2 V3.65 a2 2 0 0 1 2 -2 Z" fill="none" stroke="#555" stroke-width="1.3"/><path d="M9.2 1.8 V4.5 a1.5 1.5 0 0 0 1.5 1.5 H13.7" fill="none" stroke="#555" stroke-width="1.1"/><path d="M4.3 7.2 H6.2 M4.3 10.3 H10.8 M4.3 13.2 H10.8" stroke="#555" stroke-width="1.2"/></svg></div>
<div class="a" style="left:443px;top:429.22px"><svg width="6" height="16" viewBox="0 0 6 16"><circle cx="3" cy="2" r="1.6" fill="#444"/><circle cx="3" cy="8" r="1.6" fill="#444"/><circle cx="3" cy="14" r="1.6" fill="#444"/></svg></div>
<div class="t" style="left:486.66px;top:428.00px;font-size:14px;letter-spacing:0.38px;color:#2f62cc;">poor@effort83382<span style="letter-spacing:-0.1px">...</span>.</div>
<div class="t" style="left:662.77px;top:428.00px;font-size:14.5px;letter-spacing:0.4px;color:#333;">260.103.1528x0483</div>
<div class="a" style="left:839px;top:424.22px;width:137px;height:25.5px;border-radius:5px;background:#eaedf1"></div>
<div class="t" style="left:844.61px;top:430.00px;font-size:14.2px;letter-spacing:0.310px;color:#333;">Sathish kumar Hari</div>
<div class="a" style="left:1015px;top:421.22px;width:33.5px;height:26.5px;border-radius:5px;background:#aaa9e9"></div>
<div class="t" style="left:1021.00px;top:428.00px;font-size:14px;letter-spacing:-0.320px;color:#221f62;">VIP</div>
<div class="a" style="left:1190.6px;top:424.72px;height:24.5px;width:85.5px;border-radius:5px;background:#ddedfc"></div>
<div class="a" style="left:1197px;top:431.72px"><svg width="14" height="12" viewBox="0 0 14 12"><path d="M1.5 1.2 H8.2 L12.3 6 L8.2 10.8 H1.5 L4.9 6 Z" fill="none" stroke="#3d5570" stroke-width="1.1" stroke-linejoin="round"/></svg></div>
<div class="t" style="left:1216.18px;top:430.00px;font-size:14px;letter-spacing:0.35px;color:#2b4a66;">Reseller</div>
<div class="t" style="left:1366.78px;top:430.00px;font-size:14px;letter-spacing:0.354px;color:#333;">Port Heidiberg</div>
<div class="a" style="left:6px;top:507.05px;width:1590px;height:1px;background:#e9edf2"></div>
<div class="a" style="left:18px;top:474.65px;width:18.5px;height:18.5px;border:1.3px solid #d3dae3;border-radius:3px;background:#fff"></div>
<div class="a" style="left:64.6px;top:465.15px;width:38px;height:38px;border-radius:50%;background:#f0c3e3"></div>
<div class="t" style="left:64.6px;width:38px;text-align:center;top:477.65px;font-size:14px;color:#c2519c">B</div>
<div class="t" style="left:111.32px;top:477.00px;font-size:16px;letter-spacing:0.63px;color:#1f4fbf;-webkit-text-stroke:0.15px #1f4fbf">Brian Jones Timothy Collins</div>
<div class="a" style="left:337.5px;top:475.65px"><svg width="18" height="15" viewBox="0 0 18 15"><rect x="1.65" y="1.65" width="15.2" height="12.2" rx="1.5" fill="none" stroke="#555" stroke-width="1.3"/><path d="M2.2 2.4 L9.25 8.2 L16.3 2.4" fill="none" stroke="#555" stroke-width="1.3"/></svg></div>
<div class="a" style="left:371.5px;top:474.65px"><svg width="16" height="18" viewBox="0 0 16 18"><rect x="1.65" y="2.4" width="12.7" height="14.4" rx="2" fill="none" stroke="#555" stroke-width="1.3"/><path d="M4.5 1.2v2.4M8 1.2v2.4M11.5 1.2v2.4" stroke="#555" stroke-width="1.2"/><path d="M5.2 9.8 L7.2 11.7 L10.8 8" fill="none" stroke="#555" stroke-width="1.2"/></svg></div>
<div class="a" style="left:404.5px;top:474.65px"><svg width="16" height="18" viewBox="0 0 16 18"><path d="M3.4 1.65 H9.4 L13.85 6.1 V14.8 a2 2 0 0 1 -2 2 H3.4 a2 2 0 0 1 -2 -2 V3.65 a2 2 0 0 1 2 -2 Z" fill="none" stroke="#555" stroke-width="1.3"/><path d="M9.2 1.8 V4.5 a1.5 1.5 0 0 0 1.5 1.5 H13.7" fill="none" stroke="#555" stroke-width="1.1"/><path d="M4.3 7.2 H6.2 M4.3 10.3 H10.8 M4.3 13.2 H10.8" stroke="#555" stroke-width="1.2"/></svg></div>
<div class="a" style="left:443px;top:476.15px"><svg width="6" height="16" viewBox="0 0 6 16"><circle cx="3" cy="2" r="1.6" fill="#444"/><circle cx="3" cy="8" r="1.6" fill="#444"/><circle cx="3" cy="14" r="1.6" fill="#444"/></svg></div>
<div class="t" style="left:486.94px;top:475.00px;font-size:14px;letter-spacing:0.38px;color:#2f62cc;">ever@production9<span style="letter-spacing:-0.1px">...</span></div>
<div class="t" style="left:662.77px;top:475.00px;font-size:14.5px;letter-spacing:0.4px;color:#333;">288.673.9340</div>
<div class="a" style="left:839px;top:471.15px;width:137px;height:25.5px;border-radius:5px;background:#eaedf1"></div>
<div class="t" style="left:844.61px;top:477.00px;font-size:14.2px;letter-spacing:0.310px;color:#333;">Sathish kumar Hari</div>
<div class="a" style="left:1015px;top:468.15px;width:33.5px;height:26.5px;border-radius:5px;background:#aaa9e9"></div>
<div class="t" style="left:1021.00px;top:475.00px;font-size:14px;letter-spacing:-0.320px;color:#221f62;">VIP</div>
<div class="a" style="left:1190.6px;top:471.65px;height:24.5px;width:79.7px;border-radius:5px;background:#ddedfc"></div>
<div class="a" style="left:1197px;top:478.65px"><svg width="14" height="12" viewBox="0 0 14 12"><path d="M1.5 1.2 H8.2 L12.3 6 L8.2 10.8 H1.5 L4.9 6 Z" fill="none" stroke="#3d5570" stroke-width="1.1" stroke-linejoin="round"/></svg></div>
<div class="t" style="left:1216.18px;top:477.00px;font-size:14px;letter-spacing:0.35px;color:#2b4a66;">Partner</div>
<div class="t" style="left:1367.27px;top:477.00px;font-size:14px;letter-spacing:0.354px;color:#333;">South Joshua</div>
<div class="a" style="left:6px;top:553.98px;width:1590px;height:1px;background:#e9edf2"></div>
<div class="a" style="left:18px;top:521.58px;width:18.5px;height:18.5px;border:1.3px solid #d3dae3;border-radius:3px;background:#fff"></div>
<div class="a" style="left:64.6px;top:512.08px;width:38px;height:38px;border-radius:50%;background:#f6eeaa"></div>
<div class="t" style="left:64.6px;width:38px;text-align:center;top:524.58px;font-size:14px;color:#c99c18">S</div>
<div class="t" style="left:111.88px;top:524.00px;font-size:16px;letter-spacing:0.63px;color:#1f4fbf;-webkit-text-stroke:0.15px #1f4fbf">Stephen Mack Janet Rodri<span style="letter-spacing:-0.15px">...</span></div>
<div class="a" style="left:337.5px;top:522.58px"><svg width="18" height="15" viewBox="0 0 18 15"><rect x="1.65" y="1.65" width="15.2" height="12.2" rx="1.5" fill="none" stroke="#555" stroke-width="1.3"/><path d="M2.2 2.4 L9.25 8.2 L16.3 2.4" fill="none" stroke="#555" stroke-width="1.3"/></svg></div>
<div class="a" style="left:371.5px;top:521.58px"><svg width="16" height="18" viewBox="0 0 16 18"><rect x="1.65" y="2.4" width="12.7" height="14.4" rx="2" fill="none" stroke="#555" stroke-width="1.3"/><path d="M4.5 1.2v2.4M8 1.2v2.4M11.5 1.2v2.4" stroke="#555" stroke-width="1.2"/><path d="M5.2 9.8 L7.2 11.7 L10.8 8" fill="none" stroke="#555" stroke-width="1.2"/></svg></div>
<div class="a" style="left:404.5px;top:521.58px"><svg width="16" height="18" viewBox="0 0 16 18"><path d="M3.4 1.65 H9.4 L13.85 6.1 V14.8 a2 2 0 0 1 -2 2 H3.4 a2 2 0 0 1 -2 -2 V3.65 a2 2 0 0 1 2 -2 Z" fill="none" stroke="#555" stroke-width="1.3"/><path d="M9.2 1.8 V4.5 a1.5 1.5 0 0 0 1.5 1.5 H13.7" fill="none" stroke="#555" stroke-width="1.1"/><path d="M4.3 7.2 H6.2 M4.3 10.3 H10.8 M4.3 13.2 H10.8" stroke="#555" stroke-width="1.2"/></svg></div>
<div class="a" style="left:443px;top:523.08px"><svg width="6" height="16" viewBox="0 0 6 16"><circle cx="3" cy="2" r="1.6" fill="#444"/><circle cx="3" cy="8" r="1.6" fill="#444"/><circle cx="3" cy="14" r="1.6" fill="#444"/></svg></div>
<div class="t" style="left:487.15px;top:522.00px;font-size:14px;letter-spacing:0.38px;color:#2f62cc;">station@daughter4<span style="letter-spacing:-0.1px">...</span></div>
<div class="t" style="left:662.63px;top:522.00px;font-size:14.5px;letter-spacing:0.4px;color:#333;">(415)540-1985x14359</div>
<div class="a" style="left:839px;top:518.08px;width:137px;height:25.5px;border-radius:5px;background:#eaedf1"></div>
<div class="t" style="left:844.61px;top:524.00px;font-size:14.2px;letter-spacing:0.310px;color:#333;">Sathish kumar Hari</div>
<div class="a" style="left:1015px;top:515.08px;width:33.5px;height:26.5px;border-radius:5px;background:#aaa9e9"></div>
<div class="t" style="left:1021.00px;top:522.00px;font-size:14px;letter-spacing:-0.320px;color:#221f62;">VIP</div>
<div class="a" style="left:1190.6px;top:518.58px;height:24.5px;width:126.4px;border-radius:5px;background:#ddedfc"></div>
<div class="a" style="left:1197px;top:525.58px"><svg width="14" height="12" viewBox="0 0 14 12"><path d="M1.5 1.2 H8.2 L12.3 6 L8.2 10.8 H1.5 L4.9 6 Z" fill="none" stroke="#3d5570" stroke-width="1.1" stroke-linejoin="round"/></svg></div>
<div class="t" style="left:1216.67px;top:524.00px;font-size:14px;letter-spacing:0.35px;color:#2b4a66;">Qualified Lead</div>
<div class="t" style="left:1367.27px;top:524.00px;font-size:14px;letter-spacing:0.354px;color:#333;">Smithland</div>
<div class="a" style="left:6px;top:600.91px;width:1590px;height:1px;background:#e9edf2"></div>
<div class="a" style="left:18px;top:568.51px;width:18.5px;height:18.5px;border:1.3px solid #d3dae3;border-radius:3px;background:#fff"></div>
<div class="a" style="left:64.6px;top:559.01px;width:38px;height:38px;border-radius:50%;background:#d8d6f8"></div>
<div class="t" style="left:64.6px;width:38px;text-align:center;top:571.51px;font-size:14px;color:#8581dd">E</div>
<div class="t" style="left:111.32px;top:571.00px;font-size:16px;letter-spacing:0.63px;color:#1f4fbf;-webkit-text-stroke:0.15px #1f4fbf">Erika Ford Alexandra New<span style="letter-spacing:-0.15px">...</span></div>
<div class="a" style="left:337.5px;top:569.51px"><svg width="18" height="15" viewBox="0 0 18 15"><rect x="1.65" y="1.65" width="15.2" height="12.2" rx="1.5" fill="none" stroke="#555" stroke-width="1.3"/><path d="M2.2 2.4 L9.25 8.2 L16.3 2.4" fill="none" stroke="#555" stroke-width="1.3"/></svg></div>
<div class="a" style="left:371.5px;top:568.51px"><svg width="16" height="18" viewBox="0 0 16 18"><rect x="1.65" y="2.4" width="12.7" height="14.4" rx="2" fill="none" stroke="#555" stroke-width="1.3"/><path d="M4.5 1.2v2.4M8 1.2v2.4M11.5 1.2v2.4" stroke="#555" stroke-width="1.2"/><path d="M5.2 9.8 L7.2 11.7 L10.8 8" fill="none" stroke="#555" stroke-width="1.2"/></svg></div>
<div class="a" style="left:404.5px;top:568.51px"><svg width="16" height="18" viewBox="0 0 16 18"><path d="M3.4 1.65 H9.4 L13.85 6.1 V14.8 a2 2 0 0 1 -2 2 H3.4 a2 2 0 0 1 -2 -2 V3.65 a2 2 0 0 1 2 -2 Z" fill="none" stroke="#555" stroke-width="1.3"/><path d="M9.2 1.8 V4.5 a1.5 1.5 0 0 0 1.5 1.5 H13.7" fill="none" stroke="#555" stroke-width="1.1"/><path d="M4.3 7.2 H6.2 M4.3 10.3 H10.8 M4.3 13.2 H10.8" stroke="#555" stroke-width="1.2"/></svg></div>
<div class="a" style="left:443px;top:570.01px"><svg width="6" height="16" viewBox="0 0 6 16"><circle cx="3" cy="2" r="1.6" fill="#444"/><circle cx="3" cy="8" r="1.6" fill="#444"/><circle cx="3" cy="14" r="1.6" fill="#444"/></svg></div>
<div class="t" style="left:486.66px;top:569.00px;font-size:14px;letter-spacing:0.38px;color:#2f62cc;">bad@resource404<span style="letter-spacing:-0.1px">...</span></div>
<div class="t" style="left:662.63px;top:569.00px;font-size:14.5px;letter-spacing:0.4px;color:#333;">(191)004-2946x6982</div>
<div class="a" style="left:839px;top:565.01px;width:137px;height:25.5px;border-radius:5px;background:#eaedf1"></div>
<div class="t" style="left:844.61px;top:571.00px;font-size:14.2px;letter-spacing:0.310px;color:#333;">Sathish kumar Hari</div>
<div class="a" style="left:1015px;top:562.01px;width:33.5px;height:26.5px;border-radius:5px;background:#aaa9e9"></div>
<div class="t" style="left:1021.00px;top:569.00px;font-size:14px;letter-spacing:-0.320px;color:#221f62;">VIP</div>
<div class="a" style="left:1190.6px;top:565.51px;height:24.5px;width:95.2px;border-radius:5px;background:#ddedfc"></div>
<div class="a" style="left:1197px;top:572.51px"><svg width="14" height="12" viewBox="0 0 14 12"><path d="M1.5 1.2 H8.2 L12.3 6 L8.2 10.8 H1.5 L4.9 6 Z" fill="none" stroke="#3d5570" stroke-width="1.1" stroke-linejoin="round"/></svg></div>
<div class="t" style="left:1216.60px;top:571.00px;font-size:14px;letter-spacing:0.35px;color:#2b4a66;">Customer</div>
<div class="t" style="left:1366.78px;top:571.00px;font-size:14px;letter-spacing:0.354px;color:#333;">Maryborough</div>
<div class="a" style="left:6px;top:647.84px;width:1590px;height:1px;background:#e9edf2"></div>
<div class="a" style="left:18px;top:615.44px;width:18.5px;height:18.5px;border:1.3px solid #d3dae3;border-radius:3px;background:#fff"></div>
<div class="a" style="left:64.6px;top:605.94px;width:38px;height:38px;border-radius:50%;background:#b0e2e7"></div>
<div class="t" style="left:64.6px;width:38px;text-align:center;top:618.44px;font-size:14px;color:#2b9aae">A</div>
<div class="t" style="left:112.60px;top:617.00px;font-size:16px;letter-spacing:0.63px;color:#1f4fbf;-webkit-text-stroke:0.15px #1f4fbf">Amber Arnold Thomas Wil<span style="letter-spacing:-0.15px">...</span></div>
<div class="a" style="left:337.5px;top:616.44px"><svg width="18" height="15" viewBox="0 0 18 15"><rect x="1.65" y="1.65" width="15.2" height="12.2" rx="1.5" fill="none" stroke="#555" stroke-width="1.3"/><path d="M2.2 2.4 L9.25 8.2 L16.3 2.4" fill="none" stroke="#555" stroke-width="1.3"/></svg></div>
<div class="a" style="left:371.5px;top:615.44px"><svg width="16" height="18" viewBox="0 0 16 18"><rect x="1.65" y="2.4" width="12.7" height="14.4" rx="2" fill="none" stroke="#555" stroke-width="1.3"/><path d="M4.5 1.2v2.4M8 1.2v2.4M11.5 1.2v2.4" stroke="#555" stroke-width="1.2"/><path d="M5.2 9.8 L7.2 11.7 L10.8 8" fill="none" stroke="#555" stroke-width="1.2"/></svg></div>
<div class="a" style="left:404.5px;top:615.44px"><svg width="16" height="18" viewBox="0 0 16 18"><path d="M3.4 1.65 H9.4 L13.85 6.1 V14.8 a2 2 0 0 1 -2 2 H3.4 a2 2 0 0 1 -2 -2 V3.65 a2 2 0 0 1 2 -2 Z" fill="none" stroke="#555" stroke-width="1.3"/><path d="M9.2 1.8 V4.5 a1.5 1.5 0 0 0 1.5 1.5 H13.7" fill="none" stroke="#555" stroke-width="1.1"/><path d="M4.3 7.2 H6.2 M4.3 10.3 H10.8 M4.3 13.2 H10.8" stroke="#555" stroke-width="1.2"/></svg></div>
<div class="a" style="left:443px;top:616.94px"><svg width="6" height="16" viewBox="0 0 6 16"><circle cx="3" cy="2" r="1.6" fill="#444"/><circle cx="3" cy="8" r="1.6" fill="#444"/><circle cx="3" cy="14" r="1.6" fill="#444"/></svg></div>
<div class="t" style="left:486.59px;top:615.00px;font-size:14px;letter-spacing:0.38px;color:#2f62cc;">mother@many466<span style="letter-spacing:-0.1px">...</span></div>
<div class="t" style="left:662.41px;top:616.00px;font-size:14.5px;letter-spacing:0.4px;color:#333;">141.850.8923x84382</div>
<div class="a" style="left:839px;top:611.94px;width:137px;height:25.5px;border-radius:5px;background:#eaedf1"></div>
<div class="t" style="left:844.61px;top:618.00px;font-size:14.2px;letter-spacing:0.310px;color:#333;">Sathish kumar Hari</div>
<div class="a" style="left:1015px;top:608.94px;width:33.5px;height:26.5px;border-radius:5px;background:#aaa9e9"></div>
<div class="t" style="left:1021.00px;top:616.00px;font-size:14px;letter-spacing:-0.320px;color:#221f62;">VIP</div>
<div class="a" style="left:1190.6px;top:612.44px;height:24.5px;width:95.2px;border-radius:5px;background:#ddedfc"></div>
<div class="a" style="left:1197px;top:619.44px"><svg width="14" height="12" viewBox="0 0 14 12"><path d="M1.5 1.2 H8.2 L12.3 6 L8.2 10.8 H1.5 L4.9 6 Z" fill="none" stroke="#3d5570" stroke-width="1.1" stroke-linejoin="round"/></svg></div>
<div class="t" style="left:1216.60px;top:618.00px;font-size:14px;letter-spacing:0.35px;color:#2b4a66;">Customer</div>
<div class="t" style="left:1366.78px;top:618.00px;font-size:14px;letter-spacing:0.354px;color:#333;">Lake Davidfort</div>
<div class="a" style="left:6px;top:694.77px;width:1590px;height:1px;background:#e9edf2"></div>
<div class="a" style="left:18px;top:662.37px;width:18.5px;height:18.5px;border:1.3px solid #d3dae3;border-radius:3px;background:#fff"></div>
<div class="a" style="left:64.6px;top:652.87px;width:38px;height:38px;border-radius:50%;background:#b8d4f4"></div>
<div class="t" style="left:64.6px;width:38px;text-align:center;top:665.37px;font-size:14px;color:#5b96de">D</div>
<div class="t" style="left:111.32px;top:664.00px;font-size:16px;letter-spacing:0.63px;color:#1f4fbf;-webkit-text-stroke:0.15px #1f4fbf">Daniel Schneider Jermain<span style="letter-spacing:-0.15px">...</span></div>
<div class="a" style="left:337.5px;top:663.37px"><svg width="18" height="15" viewBox="0 0 18 15"><rect x="1.65" y="1.65" width="15.2" height="12.2" rx="1.5" fill="none" stroke="#555" stroke-width="1.3"/><path d="M2.2 2.4 L9.25 8.2 L16.3 2.4" fill="none" stroke="#555" stroke-width="1.3"/></svg></div>
<div class="a" style="left:371.5px;top:662.37px"><svg width="16" height="18" viewBox="0 0 16 18"><rect x="1.65" y="2.4" width="12.7" height="14.4" rx="2" fill="none" stroke="#555" stroke-width="1.3"/><path d="M4.5 1.2v2.4M8 1.2v2.4M11.5 1.2v2.4" stroke="#555" stroke-width="1.2"/><path d="M5.2 9.8 L7.2 11.7 L10.8 8" fill="none" stroke="#555" stroke-width="1.2"/></svg></div>
<div class="a" style="left:404.5px;top:662.37px"><svg width="16" height="18" viewBox="0 0 16 18"><path d="M3.4 1.65 H9.4 L13.85 6.1 V14.8 a2 2 0 0 1 -2 2 H3.4 a2 2 0 0 1 -2 -2 V3.65 a2 2 0 0 1 2 -2 Z" fill="none" stroke="#555" stroke-width="1.3"/><path d="M9.2 1.8 V4.5 a1.5 1.5 0 0 0 1.5 1.5 H13.7" fill="none" stroke="#555" stroke-width="1.1"/><path d="M4.3 7.2 H6.2 M4.3 10.3 H10.8 M4.3 13.2 H10.8" stroke="#555" stroke-width="1.2"/></svg></div>
<div class="a" style="left:443px;top:663.87px"><svg width="6" height="16" viewBox="0 0 6 16"><circle cx="3" cy="2" r="1.6" fill="#444"/><circle cx="3" cy="8" r="1.6" fill="#444"/><circle cx="3" cy="14" r="1.6" fill="#444"/></svg></div>
<div class="t" style="left:486.94px;top:662.00px;font-size:14px;letter-spacing:0.38px;color:#2f62cc;">as@ever21657.com</div>
<div class="t" style="left:662.92px;top:663.00px;font-size:14.5px;letter-spacing:0.4px;color:#333;">873-012-3950x6381</div>
<div class="a" style="left:839px;top:658.87px;width:137px;height:25.5px;border-radius:5px;background:#eaedf1"></div>
<div class="t" style="left:844.61px;top:665.00px;font-size:14.2px;letter-spacing:0.310px;color:#333;">Sathish kumar Hari</div>
<div class="a" style="left:1015px;top:655.87px;width:33.5px;height:26.5px;border-radius:5px;background:#aaa9e9"></div>
<div class="t" style="left:1021.00px;top:663.00px;font-size:14px;letter-spacing:-0.320px;color:#221f62;">VIP</div>
<div class="a" style="left:1190.6px;top:659.37px;height:24.5px;width:126.4px;border-radius:5px;background:#ddedfc"></div>
<div class="a" style="left:1197px;top:666.37px"><svg width="14" height="12" viewBox="0 0 14 12"><path d="M1.5 1.2 H8.2 L12.3 6 L8.2 10.8 H1.5 L4.9 6 Z" fill="none" stroke="#3d5570" stroke-width="1.1" stroke-linejoin="round"/></svg></div>
<div class="t" style="left:1216.67px;top:665.00px;font-size:14px;letter-spacing:0.35px;color:#2b4a66;">Qualified Lead</div>
<div class="t" style="left:1367.90px;top:665.00px;font-size:14px;letter-spacing:0.354px;color:#333;">Alanstad</div>
<div class="a" style="left:6px;top:741.70px;width:1590px;height:1px;background:#e9edf2"></div>
<div class="a" style="left:18px;top:709.30px;width:18.5px;height:18.5px;border:1.3px solid #d3dae3;border-radius:3px;background:#fff"></div>
<div class="a" style="left:64.6px;top:699.80px;width:38px;height:38px;border-radius:50%;background:#d8d6f8"></div>
<div class="t" style="left:64.6px;width:38px;text-align:center;top:712.30px;font-size:14px;color:#8581dd">M</div>
<div class="t" style="left:111.32px;top:711.00px;font-size:16px;letter-spacing:0.63px;color:#1f4fbf;-webkit-text-stroke:0.15px #1f4fbf">Michael Singleton Jeffrey <span style="letter-spacing:-0.15px">...</span></div>
<div class="a" style="left:337.5px;top:710.30px"><svg width="18" height="15" viewBox="0 0 18 15"><rect x="1.65" y="1.65" width="15.2" height="12.2" rx="1.5" fill="none" stroke="#555" stroke-width="1.3"/><path d="M2.2 2.4 L9.25 8.2 L16.3 2.4" fill="none" stroke="#555" stroke-width="1.3"/></svg></div>
<div class="a" style="left:371.5px;top:709.30px"><svg width="16" height="18" viewBox="0 0 16 18"><rect x="1.65" y="2.4" width="12.7" height="14.4" rx="2" fill="none" stroke="#555" stroke-width="1.3"/><path d="M4.5 1.2v2.4M8 1.2v2.4M11.5 1.2v2.4" stroke="#555" stroke-width="1.2"/><path d="M5.2 9.8 L7.2 11.7 L10.8 8" fill="none" stroke="#555" stroke-width="1.2"/></svg></div>
<div class="a" style="left:404.5px;top:709.30px"><svg width="16" height="18" viewBox="0 0 16 18"><path d="M3.4 1.65 H9.4 L13.85 6.1 V14.8 a2 2 0 0 1 -2 2 H3.4 a2 2 0 0 1 -2 -2 V3.65 a2 2 0 0 1 2 -2 Z" fill="none" stroke="#555" stroke-width="1.3"/><path d="M9.2 1.8 V4.5 a1.5 1.5 0 0 0 1.5 1.5 H13.7" fill="none" stroke="#555" stroke-width="1.1"/><path d="M4.3 7.2 H6.2 M4.3 10.3 H10.8 M4.3 13.2 H10.8" stroke="#555" stroke-width="1.2"/></svg></div>
<div class="a" style="left:443px;top:710.80px"><svg width="6" height="16" viewBox="0 0 6 16"><circle cx="3" cy="2" r="1.6" fill="#444"/><circle cx="3" cy="8" r="1.6" fill="#444"/><circle cx="3" cy="14" r="1.6" fill="#444"/></svg></div>
<div class="t" style="left:486.59px;top:709.00px;font-size:14px;letter-spacing:0.38px;color:#2f62cc;">nice@interview821<span style="letter-spacing:-0.1px">...</span></div>
<div class="t" style="left:662.99px;top:710.00px;font-size:14.5px;letter-spacing:0.4px;color:#333;">342-349-5214x0048</div>
<div class="a" style="left:839px;top:705.80px;width:137px;height:25.5px;border-radius:5px;background:#eaedf1"></div>
<div class="t" style="left:844.61px;top:712.00px;font-size:14.2px;letter-spacing:0.310px;color:#333;">Sathish kumar Hari</div>
<div class="a" style="left:1015px;top:702.80px;width:33.5px;height:26.5px;border-radius:5px;background:#aaa9e9"></div>
<div class="t" style="left:1021.00px;top:710.00px;font-size:14px;letter-spacing:-0.320px;color:#221f62;">VIP</div>
<div class="a" style="left:1190.6px;top:706.30px;height:24.5px;width:79.7px;border-radius:5px;background:#ddedfc"></div>
<div class="a" style="left:1197px;top:713.30px"><svg width="14" height="12" viewBox="0 0 14 12"><path d="M1.5 1.2 H8.2 L12.3 6 L8.2 10.8 H1.5 L4.9 6 Z" fill="none" stroke="#3d5570" stroke-width="1.1" stroke-linejoin="round"/></svg></div>
<div class="t" style="left:1216.18px;top:712.00px;font-size:14px;letter-spacing:0.35px;color:#2b4a66;">Partner</div>
<div class="t" style="left:1367.90px;top:712.00px;font-size:14px;letter-spacing:0.354px;color:#333;">West Daniel</div>
<div class="a" style="left:6px;top:788.63px;width:1590px;height:1px;background:#e9edf2"></div>
<div class="a" style="left:18px;top:756.23px;width:18.5px;height:18.5px;border:1.3px solid #d3dae3;border-radius:3px;background:#fff"></div>
<div class="a" style="left:64.6px;top:746.73px;width:38px;height:38px;border-radius:50%;background:#b8d4f4"></div>
<div class="t" style="left:64.6px;width:38px;text-align:center;top:759.23px;font-size:14px;color:#5b96de">D</div>
<div class="t" style="left:111.32px;top:758.00px;font-size:16px;letter-spacing:0.63px;color:#1f4fbf;-webkit-text-stroke:0.15px #1f4fbf">Debra Johnson Robert Tran</div>
<div class="a" style="left:337.5px;top:757.23px"><svg width="18" height="15" viewBox="0 0 18 15"><rect x="1.65" y="1.65" width="15.2" height="12.2" rx="1.5" fill="none" stroke="#555" stroke-width="1.3"/><path d="M2.2 2.4 L9.25 8.2 L16.3 2.4" fill="none" stroke="#555" stroke-width="1.3"/></svg></div>
<div class="a" style="left:371.5px;top:756.23px"><svg width="16" height="18" viewBox="0 0 16 18"><rect x="1.65" y="2.4" width="12.7" height="14.4" rx="2" fill="none" stroke="#555" stroke-width="1.3"/><path d="M4.5 1.2v2.4M8 1.2v2.4M11.5 1.2v2.4" stroke="#555" stroke-width="1.2"/><path d="M5.2 9.8 L7.2 11.7 L10.8 8" fill="none" stroke="#555" stroke-width="1.2"/></svg></div>
<div class="a" style="left:404.5px;top:756.23px"><svg width="16" height="18" viewBox="0 0 16 18"><path d="M3.4 1.65 H9.4 L13.85 6.1 V14.8 a2 2 0 0 1 -2 2 H3.4 a2 2 0 0 1 -2 -2 V3.65 a2 2 0 0 1 2 -2 Z" fill="none" stroke="#555" stroke-width="1.3"/><path d="M9.2 1.8 V4.5 a1.5 1.5 0 0 0 1.5 1.5 H13.7" fill="none" stroke="#555" stroke-width="1.1"/><path d="M4.3 7.2 H6.2 M4.3 10.3 H10.8 M4.3 13.2 H10.8" stroke="#555" stroke-width="1.2"/></svg></div>
<div class="a" style="left:443px;top:757.73px"><svg width="6" height="16" viewBox="0 0 6 16"><circle cx="3" cy="2" r="1.6" fill="#444"/><circle cx="3" cy="8" r="1.6" fill="#444"/><circle cx="3" cy="14" r="1.6" fill="#444"/></svg></div>
<div class="t" style="left:487.15px;top:756.00px;font-size:14px;letter-spacing:0.38px;color:#2f62cc;">sound@under9774<span style="letter-spacing:-0.1px">...</span></div>
<div class="t" style="left:662.63px;top:757.00px;font-size:14.5px;letter-spacing:0.4px;color:#333;">(346)599-4244x44...</div>
<div class="a" style="left:839px;top:752.73px;width:137px;height:25.5px;border-radius:5px;background:#eaedf1"></div>
<div class="t" style="left:844.61px;top:759.00px;font-size:14.2px;letter-spacing:0.310px;color:#333;">Sathish kumar Hari</div>
<div class="a" style="left:1015px;top:749.73px;width:33.5px;height:26.5px;border-radius:5px;background:#aaa9e9"></div>
<div class="t" style="left:1021.00px;top:757.00px;font-size:14px;letter-spacing:-0.320px;color:#221f62;">VIP</div>
<div class="a" style="left:1190.6px;top:753.23px;height:24.5px;width:126.4px;border-radius:5px;background:#ddedfc"></div>
<div class="a" style="left:1197px;top:760.23px"><svg width="14" height="12" viewBox="0 0 14 12"><path d="M1.5 1.2 H8.2 L12.3 6 L8.2 10.8 H1.5 L4.9 6 Z" fill="none" stroke="#3d5570" stroke-width="1.1" stroke-linejoin="round"/></svg></div>
<div class="t" style="left:1216.67px;top:759.00px;font-size:14px;letter-spacing:0.35px;color:#2b4a66;">Qualified Lead</div>
<div class="t" style="left:1367.90px;top:759.00px;font-size:14px;letter-spacing:0.354px;color:#333;">West Laura</div>
<div class="a" style="left:6px;top:835.56px;width:1590px;height:1px;background:#e9edf2"></div>
<div class="a" style="left:18px;top:803.16px;width:18.5px;height:18.5px;border:1.3px solid #d3dae3;border-radius:3px;background:#fff"></div>
<div class="a" style="left:64.6px;top:793.66px;width:38px;height:38px;border-radius:50%;background:#f6eeaa"></div>
<div class="t" style="left:64.6px;width:38px;text-align:center;top:806.16px;font-size:14px;color:#c99c18">C</div>
<div class="t" style="left:111.80px;top:805.00px;font-size:16px;letter-spacing:0.63px;color:#1f4fbf;-webkit-text-stroke:0.15px #1f4fbf">Christian Smith Matthew <span style="letter-spacing:-0.15px">...</span></div>
<div class="a" style="left:337.5px;top:804.16px"><svg width="18" height="15" viewBox="0 0 18 15"><rect x="1.65" y="1.65" width="15.2" height="12.2" rx="1.5" fill="none" stroke="#555" stroke-width="1.3"/><path d="M2.2 2.4 L9.25 8.2 L16.3 2.4" fill="none" stroke="#555" stroke-width="1.3"/></svg></div>
<div class="a" style="left:371.5px;top:803.16px"><svg width="16" height="18" viewBox="0 0 16 18"><rect x="1.65" y="2.4" width="12.7" height="14.4" rx="2" fill="none" stroke="#555" stroke-width="1.3"/><path d="M4.5 1.2v2.4M8 1.2v2.4M11.5 1.2v2.4" stroke="#555" stroke-width="1.2"/><path d="M5.2 9.8 L7.2 11.7 L10.8 8" fill="none" stroke="#555" stroke-width="1.2"/></svg></div>
<div class="a" style="left:404.5px;top:803.16px"><svg width="16" height="18" viewBox="0 0 16 18"><path d="M3.4 1.65 H9.4 L13.85 6.1 V14.8 a2 2 0 0 1 -2 2 H3.4 a2 2 0 0 1 -2 -2 V3.65 a2 2 0 0 1 2 -2 Z" fill="none" stroke="#555" stroke-width="1.3"/><path d="M9.2 1.8 V4.5 a1.5 1.5 0 0 0 1.5 1.5 H13.7" fill="none" stroke="#555" stroke-width="1.1"/><path d="M4.3 7.2 H6.2 M4.3 10.3 H10.8 M4.3 13.2 H10.8" stroke="#555" stroke-width="1.2"/></svg></div>
<div class="a" style="left:443px;top:804.66px"><svg width="6" height="16" viewBox="0 0 6 16"><circle cx="3" cy="2" r="1.6" fill="#444"/><circle cx="3" cy="8" r="1.6" fill="#444"/><circle cx="3" cy="14" r="1.6" fill="#444"/></svg></div>
<div class="t" style="left:487.15px;top:803.00px;font-size:14px;letter-spacing:0.38px;color:#2f62cc;">store@it87162.com</div>
<div class="t" style="left:662.63px;top:804.00px;font-size:14.5px;letter-spacing:0.4px;color:#333;">(712)054-7675</div>
<div class="a" style="left:839px;top:799.66px;width:137px;height:25.5px;border-radius:5px;background:#eaedf1"></div>
<div class="t" style="left:844.61px;top:806.00px;font-size:14.2px;letter-spacing:0.310px;color:#333;">Sathish kumar Hari</div>
<div class="a" style="left:1015px;top:796.66px;width:33.5px;height:26.5px;border-radius:5px;background:#aaa9e9"></div>
<div class="t" style="left:1021.00px;top:803.00px;font-size:14px;letter-spacing:-0.320px;color:#221f62;">VIP</div>
<div class="a" style="left:1190.6px;top:800.16px;height:24.5px;width:89.6px;border-radius:5px;background:#ddedfc"></div>
<div class="a" style="left:1197px;top:807.16px"><svg width="14" height="12" viewBox="0 0 14 12"><path d="M1.5 1.2 H8.2 L12.3 6 L8.2 10.8 H1.5 L4.9 6 Z" fill="none" stroke="#3d5570" stroke-width="1.1" stroke-linejoin="round"/></svg></div>
<div class="t" style="left:1216.18px;top:806.00px;font-size:14px;letter-spacing:0.35px;color:#2b4a66;">Prospect</div>
<div class="t" style="left:1366.78px;top:806.00px;font-size:14px;letter-spacing:0.354px;color:#333;">Dominguezton</div>
<div class="a" style="left:6px;top:882.49px;width:1590px;height:1px;background:#e9edf2"></div>
<div class="a" style="left:18px;top:850.09px;width:18.5px;height:18.5px;border:1.3px solid #d3dae3;border-radius:3px;background:#fff"></div>
<div class="a" style="left:64.6px;top:840.59px;width:38px;height:38px;border-radius:50%;background:#bdf0d6"></div>
<div class="t" style="left:64.6px;width:38px;text-align:center;top:853.09px;font-size:14px;color:#28a862">W</div>
<div class="t" style="left:112.60px;top:852.00px;font-size:16px;letter-spacing:0.63px;color:#1f4fbf;-webkit-text-stroke:0.15px #1f4fbf">William Moreno Scott Olson</div>
<div class="a" style="left:337.5px;top:851.09px"><svg width="18" height="15" viewBox="0 0 18 15"><rect x="1.65" y="1.65" width="15.2" height="12.2" rx="1.5" fill="none" stroke="#555" stroke-width="1.3"/><path d="M2.2 2.4 L9.25 8.2 L16.3 2.4" fill="none" stroke="#555" stroke-width="1.3"/></svg></div>
<div class="a" style="left:371.5px;top:850.09px"><svg width="16" height="18" viewBox="0 0 16 18"><rect x="1.65" y="2.4" width="12.7" height="14.4" rx="2" fill="none" stroke="#555" stroke-width="1.3"/><path d="M4.5 1.2v2.4M8 1.2v2.4M11.5 1.2v2.4" stroke="#555" stroke-width="1.2"/><path d="M5.2 9.8 L7.2 11.7 L10.8 8" fill="none" stroke="#555" stroke-width="1.2"/></svg></div>
<div class="a" style="left:404.5px;top:850.09px"><svg width="16" height="18" viewBox="0 0 16 18"><path d="M3.4 1.65 H9.4 L13.85 6.1 V14.8 a2 2 0 0 1 -2 2 H3.4 a2 2 0 0 1 -2 -2 V3.65 a2 2 0 0 1 2 -2 Z" fill="none" stroke="#555" stroke-width="1.3"/><path d="M9.2 1.8 V4.5 a1.5 1.5 0 0 0 1.5 1.5 H13.7" fill="none" stroke="#555" stroke-width="1.1"/><path d="M4.3 7.2 H6.2 M4.3 10.3 H10.8 M4.3 13.2 H10.8" stroke="#555" stroke-width="1.2"/></svg></div>
<div class="a" style="left:443px;top:851.59px"><svg width="6" height="16" viewBox="0 0 6 16"><circle cx="3" cy="2" r="1.6" fill="#444"/><circle cx="3" cy="8" r="1.6" fill="#444"/><circle cx="3" cy="14" r="1.6" fill="#444"/></svg></div>
<div class="t" style="left:487.29px;top:850.00px;font-size:14px;letter-spacing:0.38px;color:#2f62cc;">tough@agency143<span style="letter-spacing:-0.1px">...</span></div>
<div class="t" style="left:662.77px;top:851.00px;font-size:14.5px;letter-spacing:0.4px;color:#333;">279.867.1535x4782</div>
<div class="a" style="left:839px;top:846.59px;width:137px;height:25.5px;border-radius:5px;background:#eaedf1"></div>
<div class="t" style="left:844.61px;top:853.00px;font-size:14.2px;letter-spacing:0.310px;color:#333;">Sathish kumar Hari</div>
<div class="a" style="left:1015px;top:843.59px;width:33.5px;height:26.5px;border-radius:5px;background:#aaa9e9"></div>
<div class="t" style="left:1021.00px;top:850.00px;font-size:14px;letter-spacing:-0.320px;color:#221f62;">VIP</div>
<div class="a" style="left:1190.6px;top:847.09px;height:24.5px;width:89.6px;border-radius:5px;background:#ddedfc"></div>
<div class="a" style="left:1197px;top:854.09px"><svg width="14" height="12" viewBox="0 0 14 12"><path d="M1.5 1.2 H8.2 L12.3 6 L8.2 10.8 H1.5 L4.9 6 Z" fill="none" stroke="#3d5570" stroke-width="1.1" stroke-linejoin="round"/></svg></div>
<div class="t" style="left:1216.18px;top:853.00px;font-size:14px;letter-spacing:0.35px;color:#2b4a66;">Prospect</div>
<div class="t" style="left:1367.27px;top:853.00px;font-size:14px;letter-spacing:0.354px;color:#333;">South Rachel</div>
<div class="a" style="left:6px;top:929.42px;width:1590px;height:1px;background:#e9edf2"></div>
<div class="a" style="left:18px;top:897.02px;width:18.5px;height:18.5px;border:1.3px solid #d3dae3;border-radius:3px;background:#fff"></div>
<div class="a" style="left:64.6px;top:887.52px;width:38px;height:38px;border-radius:50%;background:#f6eeaa"></div>
<div class="t" style="left:64.6px;width:38px;text-align:center;top:900.02px;font-size:14px;color:#c99c18">K</div>
<div class="t" style="left:111.32px;top:899.00px;font-size:16px;letter-spacing:0.63px;color:#1f4fbf;-webkit-text-stroke:0.15px #1f4fbf">Kristen Schneider Sarah C<span style="letter-spacing:-0.15px">...</span></div>
<div class="a" style="left:337.5px;top:898.02px"><svg width="18" height="15" viewBox="0 0 18 15"><rect x="1.65" y="1.65" width="15.2" height="12.2" rx="1.5" fill="none" stroke="#555" stroke-width="1.3"/><path d="M2.2 2.4 L9.25 8.2 L16.3 2.4" fill="none" stroke="#555" stroke-width="1.3"/></svg></div>
<div class="a" style="left:371.5px;top:897.02px"><svg width="16" height="18" viewBox="0 0 16 18"><rect x="1.65" y="2.4" width="12.7" height="14.4" rx="2" fill="none" stroke="#555" stroke-width="1.3"/><path d="M4.5 1.2v2.4M8 1.2v2.4M11.5 1.2v2.4" stroke="#555" stroke-width="1.2"/><path d="M5.2 9.8 L7.2 11.7 L10.8 8" fill="none" stroke="#555" stroke-width="1.2"/></svg></div>
<div class="a" style="left:404.5px;top:897.02px"><svg width="16" height="18" viewBox="0 0 16 18"><path d="M3.4 1.65 H9.4 L13.85 6.1 V14.8 a2 2 0 0 1 -2 2 H3.4 a2 2 0 0 1 -2 -2 V3.65 a2 2 0 0 1 2 -2 Z" fill="none" stroke="#555" stroke-width="1.3"/><path d="M9.2 1.8 V4.5 a1.5 1.5 0 0 0 1.5 1.5 H13.7" fill="none" stroke="#555" stroke-width="1.1"/><path d="M4.3 7.2 H6.2 M4.3 10.3 H10.8 M4.3 13.2 H10.8" stroke="#555" stroke-width="1.2"/></svg></div>
<div class="a" style="left:443px;top:898.52px"><svg width="6" height="16" viewBox="0 0 6 16"><circle cx="3" cy="2" r="1.6" fill="#444"/><circle cx="3" cy="8" r="1.6" fill="#444"/><circle cx="3" cy="14" r="1.6" fill="#444"/></svg></div>
<div class="t" style="left:487.36px;top:897.00px;font-size:14px;letter-spacing:0.38px;color:#2f62cc;">firm@author10571<span style="letter-spacing:-0.1px">...</span>.</div>
<div class="t" style="left:662.99px;top:898.00px;font-size:14.5px;letter-spacing:0.4px;color:#333;">089.960.8248</div>
<div class="a" style="left:839px;top:893.52px;width:137px;height:25.5px;border-radius:5px;background:#eaedf1"></div>
<div class="t" style="left:844.61px;top:900.00px;font-size:14.2px;letter-spacing:0.310px;color:#333;">Sathish kumar Hari</div>
<div class="a" style="left:1015px;top:890.52px;width:33.5px;height:26.5px;border-radius:5px;background:#aaa9e9"></div>
<div class="t" style="left:1021.00px;top:897.00px;font-size:14px;letter-spacing:-0.320px;color:#221f62;">VIP</div>
<div class="a" style="left:1190.6px;top:894.02px;height:24.5px;width:89.6px;border-radius:5px;background:#ddedfc"></div>
<div class="a" style="left:1197px;top:901.02px"><svg width="14" height="12" viewBox="0 0 14 12"><path d="M1.5 1.2 H8.2 L12.3 6 L8.2 10.8 H1.5 L4.9 6 Z" fill="none" stroke="#3d5570" stroke-width="1.1" stroke-linejoin="round"/></svg></div>
<div class="t" style="left:1216.18px;top:900.00px;font-size:14px;letter-spacing:0.35px;color:#2b4a66;">Prospect</div>
<div class="t" style="left:1366.78px;top:900.00px;font-size:14px;letter-spacing:0.354px;color:#333;">Ericshire</div>
<div class="a" style="left:6px;top:976.35px;width:1590px;height:1px;background:#e9edf2"></div>
<div class="a" style="left:18px;top:943.95px;width:18.5px;height:18.5px;border:1.3px solid #d3dae3;border-radius:3px;background:#fff"></div>
<div class="a" style="left:64.6px;top:934.45px;width:38px;height:38px;border-radius:50%;background:#d8d6f8"></div>
<div class="t" style="left:64.6px;width:38px;text-align:center;top:946.95px;font-size:14px;color:#8581dd">M</div>
<div class="t" style="left:111.32px;top:946.00px;font-size:16px;letter-spacing:0.63px;color:#1f4fbf;-webkit-text-stroke:0.15px #1f4fbf">Morgan Taylor Amber Serr<span style="letter-spacing:-0.15px">...</span></div>
<div class="a" style="left:337.5px;top:944.95px"><svg width="18" height="15" viewBox="0 0 18 15"><rect x="1.65" y="1.65" width="15.2" height="12.2" rx="1.5" fill="none" stroke="#555" stroke-width="1.3"/><path d="M2.2 2.4 L9.25 8.2 L16.3 2.4" fill="none" stroke="#555" stroke-width="1.3"/></svg></div>
<div class="a" style="left:371.5px;top:943.95px"><svg width="16" height="18" viewBox="0 0 16 18"><rect x="1.65" y="2.4" width="12.7" height="14.4" rx="2" fill="none" stroke="#555" stroke-width="1.3"/><path d="M4.5 1.2v2.4M8 1.2v2.4M11.5 1.2v2.4" stroke="#555" stroke-width="1.2"/><path d="M5.2 9.8 L7.2 11.7 L10.8 8" fill="none" stroke="#555" stroke-width="1.2"/></svg></div>
<div class="a" style="left:404.5px;top:943.95px"><svg width="16" height="18" viewBox="0 0 16 18"><path d="M3.4 1.65 H9.4 L13.85 6.1 V14.8 a2 2 0 0 1 -2 2 H3.4 a2 2 0 0 1 -2 -2 V3.65 a2 2 0 0 1 2 -2 Z" fill="none" stroke="#555" stroke-width="1.3"/><path d="M9.2 1.8 V4.5 a1.5 1.5 0 0 0 1.5 1.5 H13.7" fill="none" stroke="#555" stroke-width="1.1"/><path d="M4.3 7.2 H6.2 M4.3 10.3 H10.8 M4.3 13.2 H10.8" stroke="#555" stroke-width="1.2"/></svg></div>
<div class="a" style="left:443px;top:945.45px"><svg width="6" height="16" viewBox="0 0 6 16"><circle cx="3" cy="2" r="1.6" fill="#444"/><circle cx="3" cy="8" r="1.6" fill="#444"/><circle cx="3" cy="14" r="1.6" fill="#444"/></svg></div>
<div class="t" style="left:486.94px;top:944.00px;font-size:14px;letter-spacing:0.38px;color:#2f62cc;">our@thing14172.com</div>
<div class="t" style="left:662.77px;top:944.00px;font-size:14.5px;letter-spacing:0.4px;color:#333;">667-858-4228x334...</div>
<div class="a" style="left:839px;top:940.45px;width:137px;height:25.5px;border-radius:5px;background:#eaedf1"></div>
<div class="t" style="left:844.61px;top:947.00px;font-size:14.2px;letter-spacing:0.310px;color:#333;">Sathish kumar Hari</div>
<div class="a" style="left:1015px;top:937.45px;width:33.5px;height:26.5px;border-radius:5px;background:#aaa9e9"></div>
<div class="t" style="left:1021.00px;top:944.00px;font-size:14px;letter-spacing:-0.320px;color:#221f62;">VIP</div>
<div class="a" style="left:1190.6px;top:940.95px;height:24.5px;width:89.6px;border-radius:5px;background:#ddedfc"></div>
<div class="a" style="left:1197px;top:947.95px"><svg width="14" height="12" viewBox="0 0 14 12"><path d="M1.5 1.2 H8.2 L12.3 6 L8.2 10.8 H1.5 L4.9 6 Z" fill="none" stroke="#3d5570" stroke-width="1.1" stroke-linejoin="round"/></svg></div>
<div class="t" style="left:1216.18px;top:947.00px;font-size:14px;letter-spacing:0.35px;color:#2b4a66;">Prospect</div>
<div class="t" style="left:1366.78px;top:947.00px;font-size:14px;letter-spacing:0.354px;color:#333;">Elizabethburgh</div>
<div class="a" style="left:6px;top:1023.28px;width:1590px;height:1px;background:#e9edf2"></div>
<div class="a" style="left:18px;top:990.88px;width:18.5px;height:18.5px;border:1.3px solid #d3dae3;border-radius:3px;background:#fff"></div>
<div class="a" style="left:64.6px;top:981.38px;width:38px;height:38px;border-radius:50%;background:#b8d4f4"></div>
<div class="t" style="left:64.6px;width:38px;text-align:center;top:993.88px;font-size:14px;color:#5b96de">T</div>
<div class="t" style="left:112.28px;top:993.00px;font-size:16px;letter-spacing:0.63px;color:#1f4fbf;-webkit-text-stroke:0.15px #1f4fbf">Taylor Bell Margaret Wilson</div>
<div class="a" style="left:337.5px;top:991.88px"><svg width="18" height="15" viewBox="0 0 18 15"><rect x="1.65" y="1.65" width="15.2" height="12.2" rx="1.5" fill="none" stroke="#555" stroke-width="1.3"/><path d="M2.2 2.4 L9.25 8.2 L16.3 2.4" fill="none" stroke="#555" stroke-width="1.3"/></svg></div>
<div class="a" style="left:371.5px;top:990.88px"><svg width="16" height="18" viewBox="0 0 16 18"><rect x="1.65" y="2.4" width="12.7" height="14.4" rx="2" fill="none" stroke="#555" stroke-width="1.3"/><path d="M4.5 1.2v2.4M8 1.2v2.4M11.5 1.2v2.4" stroke="#555" stroke-width="1.2"/><path d="M5.2 9.8 L7.2 11.7 L10.8 8" fill="none" stroke="#555" stroke-width="1.2"/></svg></div>
<div class="a" style="left:404.5px;top:990.88px"><svg width="16" height="18" viewBox="0 0 16 18"><path d="M3.4 1.65 H9.4 L13.85 6.1 V14.8 a2 2 0 0 1 -2 2 H3.4 a2 2 0 0 1 -2 -2 V3.65 a2 2 0 0 1 2 -2 Z" fill="none" stroke="#555" stroke-width="1.3"/><path d="M9.2 1.8 V4.5 a1.5 1.5 0 0 0 1.5 1.5 H13.7" fill="none" stroke="#555" stroke-width="1.1"/><path d="M4.3 7.2 H6.2 M4.3 10.3 H10.8 M4.3 13.2 H10.8" stroke="#555" stroke-width="1.2"/></svg></div>
<div class="a" style="left:443px;top:992.38px"><svg width="6" height="16" viewBox="0 0 6 16"><circle cx="3" cy="2" r="1.6" fill="#444"/><circle cx="3" cy="8" r="1.6" fill="#444"/><circle cx="3" cy="14" r="1.6" fill="#444"/></svg></div>
<div class="t" style="left:487.15px;top:991.00px;font-size:14px;letter-spacing:0.38px;color:#2f62cc;">store@any80327.c<span style="letter-spacing:-0.1px">...</span></div>
<div class="t" style="left:662.99px;top:991.00px;font-size:14.5px;letter-spacing:0.4px;color:#333;">001-337-927-9545x...</div>
<div class="a" style="left:839px;top:987.38px;width:137px;height:25.5px;border-radius:5px;background:#eaedf1"></div>
<div class="t" style="left:844.61px;top:994.00px;font-size:14.2px;letter-spacing:0.310px;color:#333;">Sathish kumar Hari</div>
<div class="a" style="left:1015px;top:984.38px;width:33.5px;height:26.5px;border-radius:5px;background:#aaa9e9"></div>
<div class="t" style="left:1021.00px;top:991.00px;font-size:14px;letter-spacing:-0.320px;color:#221f62;">VIP</div>
<div class="t" style="left:1191.87px;top:993.00px;font-size:14px;letter-spacing:0.000px;color:#9aa3ad;letter-spacing:0.1px">+ Click to add</div>
<div class="t" style="left:1366.78px;top:994.00px;font-size:14px;letter-spacing:0.354px;color:#333;">Port Danica</div>
<div class="a" style="left:6px;top:998px;width:1590px;height:26px;background:#fff;box-shadow:0 -2px 4px rgba(0,0,0,0.04)"></div>
<div class="t" style="left:19px;top:1021px;font-size:14px;font-weight:bold;letter-spacing:0px;color:#1b2b55">Showing 1-25 of 25</div>
<div class="t" style="left:1405px;top:1021px;font-size:14px;font-weight:bold;letter-spacing:0px;color:#2a5bd7">Showing 25</div>
<div class="a" style="left:1519px;top:966px;width:42px;height:42px;border-radius:50%;background:#15334d;box-shadow:0 2px 8px rgba(0,0,0,0.2)"></div>
<div class="t" style="left:1519.5px;width:42px;text-align:center;top:977px;font-size:20.5px;color:#fff;-webkit-text-stroke:0.8px #fff">?</div>
<div class="bd" style="left:0;top:0;width:1600px;height:4px"></div>
<div class="bd" style="left:0;top:1024px;width:1600px;height:4px"></div>
<div class="bd" style="left:0;top:0;width:4px;height:1028px"></div>
<div class="bd" style="left:1596px;top:0;width:4px;height:1028px"></div>
</div></body></html>
